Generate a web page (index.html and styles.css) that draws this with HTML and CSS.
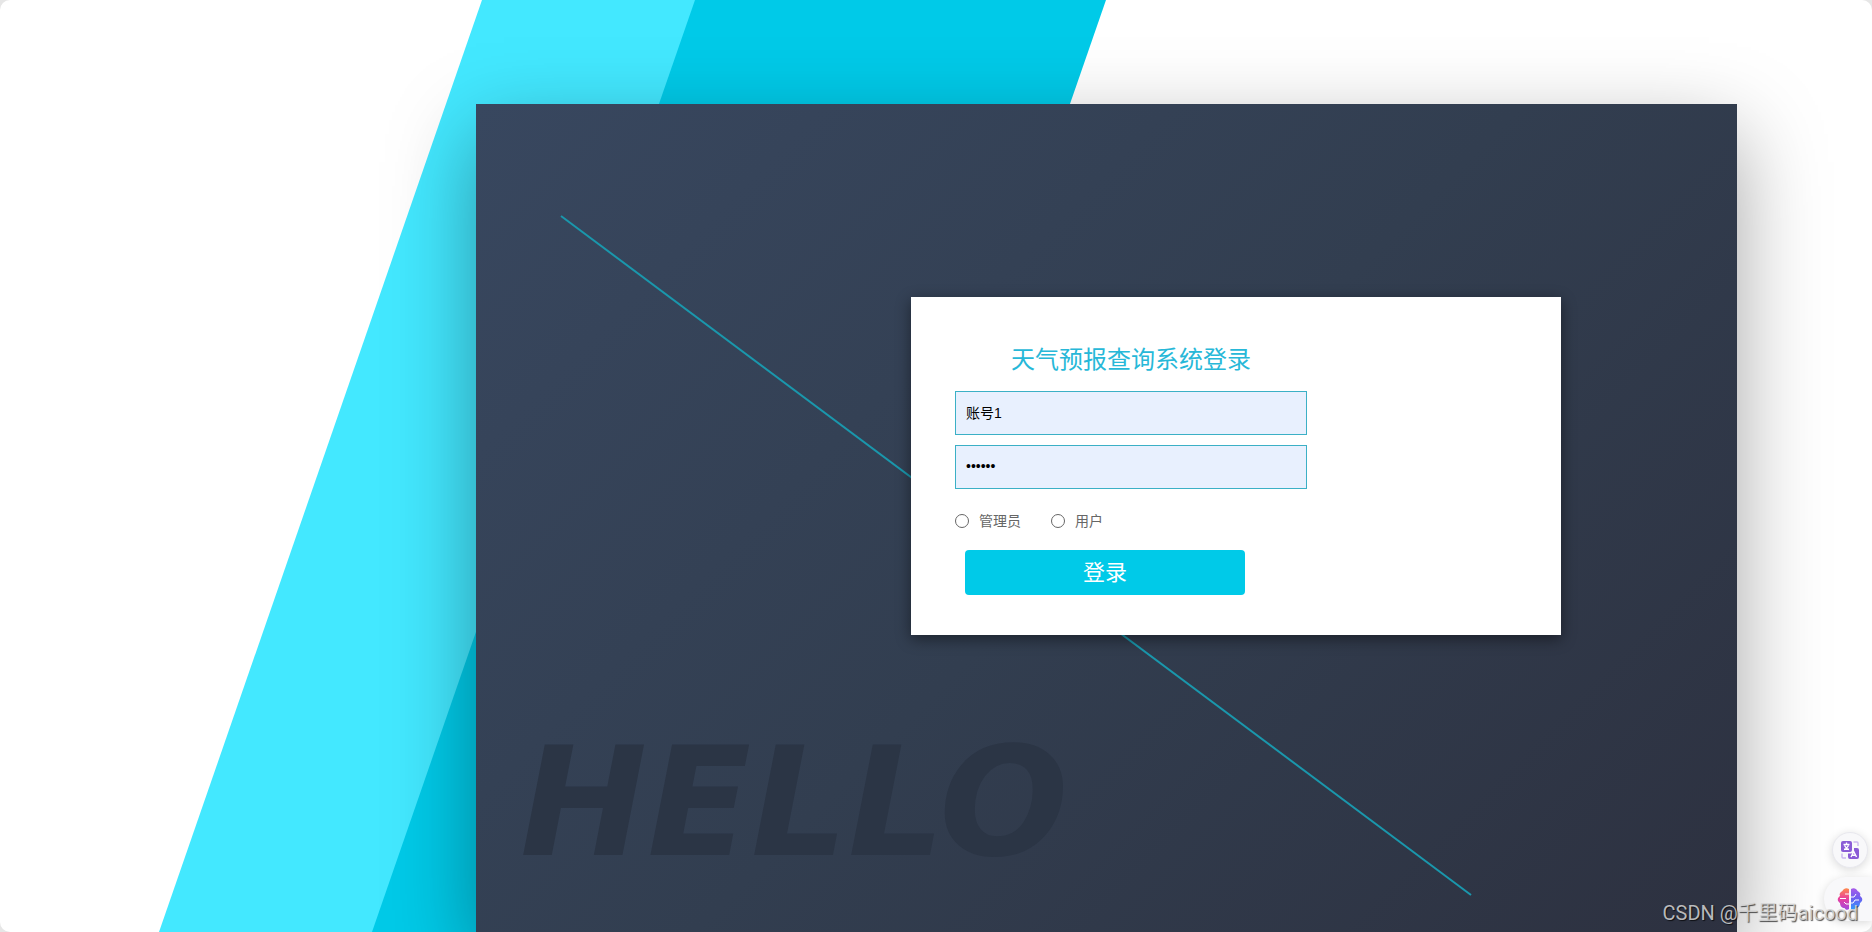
FILE: index.html
```html
<!DOCTYPE html>
<html lang="zh-CN">
<head>
<meta charset="utf-8">
<title>天气预报查询系统登录</title>
<link rel="stylesheet" href="styles.css">
</head>
<body>
<div class="page">
  <svg class="bands" viewBox="0 0 1872 932" preserveAspectRatio="none" aria-hidden="true">
    <path d="M482 0H696L373 932H159Z" fill="#43e8ff"/>
    <path d="M695 0H1106L783 932H372Z" fill="#00cae8"/>
  </svg>
  <main class="panel">
    <svg class="diagonal" viewBox="0 0 1261 828" preserveAspectRatio="none" aria-hidden="true">
      <path d="M85 112L995 791" stroke="#1a97ac" stroke-width="2"/>
    </svg>
    <form class="card">
      <h1 class="title">天气预报查询系统登录</h1>
      <input class="field" type="text" value="账号1" aria-label="账号">
      <input class="field" type="password" value="123456" aria-label="密码">
      <div class="roles">
        <label class="role"><input class="radio" type="radio" name="role">管理员</label>
        <label class="role"><input class="radio" type="radio" name="role">用户</label>
      </div>
      <button class="submit" type="button">登录</button>
    </form>
    <div class="hello">HELLO</div>
  </main>
  <button class="float translate" type="button" aria-label="翻译">
    <svg width="20" height="20" viewBox="0 0 20 20" fill="none">
      <rect x="1" y="1" width="11" height="11" rx="2" fill="#8a5bd6"/>
      <path d="M6.500 2.500V4M3.500 4.500H9.500M4.500 5.500C5.500 7.500 7 9 9 9.500M8.500 5.500C7.500 7.500 6 9 4 9.500" stroke="#fff" stroke-width="1.300"/>
      <path d="M14 8H17Q19 8 19 10V17Q19 19 17 19H10Q8 19 8 17V13.500H11Q14 13.500 14 11Z" fill="#8a5bd6"/>
      <path d="M11 17L13.800 11.500L16.500 17M12 15.300H16" stroke="#fff" stroke-width="1.400"/>
      <path d="M13.500 2H17Q18 2 18 3V6M2 13.500V17Q2 18 3 18H6" stroke="#cbb6f0" stroke-width="1.400"/>
    </svg>
  </button>
  <button class="float brain" type="button" aria-label="助手">
    <svg width="26" height="24" viewBox="0 0 26 24" fill="none">
      <defs>
        <linearGradient id="left-half" x1="0" y1="0" x2="0" y2="1"><stop offset="0" stop-color="#ff8a4c"/><stop offset=".5" stop-color="#e83fa0"/><stop offset="1" stop-color="#a04be0"/></linearGradient>
        <linearGradient id="right-half" x1="0" y1="0" x2="0" y2="1"><stop offset="0" stop-color="#a95be8"/><stop offset=".5" stop-color="#6a60f0"/><stop offset="1" stop-color="#2f9bff"/></linearGradient>
      </defs>
      <path d="M12 2C9 0 6 2 5.500 4C3 5 2 7 3 9C0 11 0 14 3 16C3 19 5 21 7.500 21C9 23.500 11 23 12 22Z" fill="url(#left-half)"/>
      <path d="M14 2C17 0 20 2 20.500 4C23 5 24 7 23 9C26 11 26 14 23 16C23 19 21 21 18.500 21C17 23.500 15 23 14 22Z" fill="url(#right-half)"/>
      <path d="M12 7H8M12 17H9L7 15M3 11.500H9M14 10H17L19 7M14 16H16L18 13H22" stroke="#fff" stroke-width="1"/>
    </svg>
  </button>
  <div class="watermark">CSDN @千里码aicood</div>
</div>
</body>
</html>
```
FILE: styles.css
```css
* { box-sizing: border-box; }
html { background: #e6e6e6; }
body {
  margin: 0;
  height: 100vh;
  overflow: hidden;
  font-family: "Liberation Sans", "Noto Sans CJK SC", sans-serif;
}
.page {
  position: relative;
  display: flex;
  height: 100%;
  padding: 104px 135px 0 476px;
  overflow: hidden;
  background: #fff;
  border-radius: 10px;
}
.bands { position: absolute; inset: 0; width: 100%; height: 100%; }
.panel {
  position: relative;
  display: flex;
  flex: 1;
  flex-direction: column;
  align-items: flex-end;
  padding: 193px 176px 0 44px;
  background: linear-gradient(135deg, #38475f 0%, #323e50 50%, #2d3140 100%);
  box-shadow: 0 30px 80px rgba(0, 0, 0, 0.36);
}
.diagonal { position: absolute; inset: 0; width: 100%; height: 100%; }
.card {
  position: relative;
  display: flex;
  flex-direction: column;
  align-items: flex-start;
  width: 650px;
  padding: 44px 44px 40px;
  background: #fff;
  box-shadow: 0 4px 14px rgba(0, 0, 0, 0.45);
}
.title {
  width: 352px;
  margin: 0 0 12px;
  font-size: 24px;
  font-weight: 400;
  line-height: 38px;
  text-align: center;
  color: #27b8d8;
}
.field {
  width: 352px;
  height: 44px;
  margin: 0 0 10px;
  padding: 0 10px 2px;
  border: 1px solid #3bb0c6;
  background: #e8f0fe;
  font: 14px "Liberation Sans", "Noto Sans CJK SC", sans-serif;
  color: #000;
}
.roles {
  display: flex;
  gap: 30px;
  margin: 10px 0 17px;
  font-size: 14px;
  font-weight: 400;
  line-height: 24px;
  color: #666;
}
.role { display: flex; align-items: center; gap: 10px; }
.radio {
  appearance: none;
  width: 14px;
  height: 14px;
  margin: 0;
  border: 1px solid #666;
  border-radius: 50%;
}
.submit {
  width: 280px;
  height: 45px;
  margin-left: 10px;
  padding: 0 0 5px;
  border: 0;
  border-radius: 4px;
  background: #00cae8;
  font: 22px "Noto Sans CJK SC", sans-serif;
  color: #fff;
}
.hello {
  position: relative;
  align-self: flex-start;
  margin-top: 78px;
  font: italic 900 152px "DejaVu Sans", sans-serif;
  line-height: 180px;
  color: #2b3545;
}
.float {
  position: absolute;
  display: flex;
  align-items: center;
  padding: 0;
  border: 1px solid #e8e8ee;
  background: #f8f8fa;
  box-shadow: 0 2px 10px rgba(0, 0, 0, 0.15);
}
.translate {
  right: 4px;
  bottom: 64px;
  justify-content: center;
  width: 36px;
  height: 36px;
  border-radius: 50%;
}
.brain {
  right: 0;
  bottom: 11px;
  width: 48px;
  height: 44px;
  padding-left: 13px;
  border-width: 0;
  border-radius: 22px 0 0 22px;
}
.watermark {
  position: absolute;
  right: 14px;
  bottom: 4px;
  font-family: Roboto, "Noto Sans CJK SC", sans-serif;
  font-size: 20px;
  font-weight: 400;
  line-height: 30px;
  color: rgba(215, 215, 215, 0.85);
  text-shadow: 1px 1px 1px rgba(0, 0, 0, 0.7);
}
```
